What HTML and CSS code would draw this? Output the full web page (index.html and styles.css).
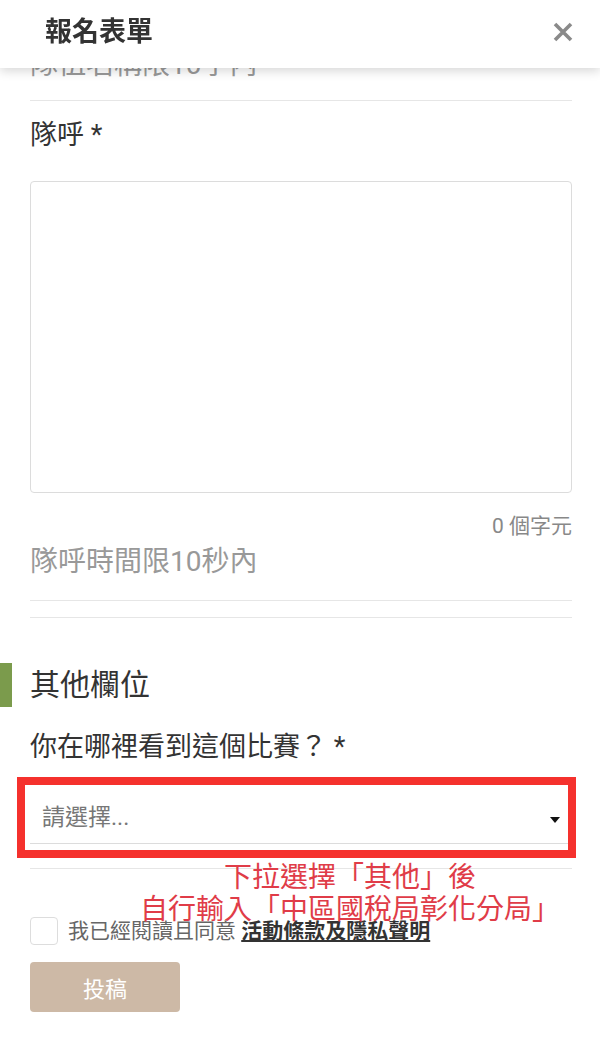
FILE: index.html
```html
<!DOCTYPE html>
<html lang="zh-Hant">
<head>
    <meta charset="UTF-8">
    <meta name="viewport" content="width=device-width, initial-scale=1.0">
    <title>報名表單</title>
    <link rel="stylesheet" href="styles.css">
</head>
<body>
    <header class="modal-header">
        <h2 class="modal-title">報名表單</h2>
        <button class="close-btn" type="button" aria-label="close">
            <svg width="20" height="20" viewBox="0 0 20 20">
                <path d="M2 2 L18 18 M18 2 L2 18" stroke="#8a8a8a" stroke-width="3.6" fill="none"/>
            </svg>
        </button>
    </header>

    <form class="form">
        <div class="field field-first">
            <div class="hint">隊伍名稱限10字內</div>
        </div>

        <div class="field field-slogan">
            <label class="label" for="slogan">隊呼 *</label>
            <textarea id="slogan" class="textarea"></textarea>
            <div class="counter">0 個字元</div>
            <div class="hint">隊呼時間限10秒內</div>
        </div>

        <div class="section-line"></div>

        <h3 class="section-title">其他欄位</h3>

        <div class="field field-source">
            <div class="label">你在哪裡看到這個比賽？ *</div>
            <div class="select-wrap">
                <div class="select">請選擇...</div>
                <span class="caret"></span>
                <div class="note">下拉選擇「其他」後<br>自行輸入「中區國稅局彰化分局」</div>
            </div>
        </div>

        <div class="agree">
            <span class="checkbox"></span>
            <span class="agree-text">我已經閱讀且同意 <a href="#" class="terms">活動條款及隱私聲明</a></span>
        </div>

        <button type="submit" class="submit">投稿</button>
    </form>
</body>
</html>
```

FILE: styles.css
```css
body {
    margin: 0;
    width: 600px;
    font-family: Roboto, "Noto Sans CJK TC", sans-serif;
    color: #333;
    background: #fff;
}

.modal-header {
    position: fixed;
    top: 0;
    left: 0;
    right: 0;
    height: 68px;
    background: #fff;
    box-shadow: 0 3px 10px rgba(0, 0, 0, 0.16);
    display: flex;
    align-items: center;
    justify-content: space-between;
    padding: 0 27px 0 45px;
    z-index: 10;
}

.modal-title {
    margin: 0;
    font-size: 27px;
    font-weight: 700;
    line-height: 36px;
    margin-top: -4px;
    color: #333;
}

.close-btn {
    border: none;
    background: none;
    padding: 0;
    width: 20px;
    height: 20px;
    margin-top: -4px;
}

.form {
    padding: 48px 28px 30px 30px;
}

.field {
    border-bottom: 1px solid #e6e6e6;
}

.field-first {
    padding-bottom: 18px;
}

.hint {
    font-size: 28px;
    line-height: 34px;
    color: #999;
}

.label {
    display: block;
    font-size: 27px;
    line-height: 36px;
    color: #333;
}

.field-slogan {
    padding: 16px 0 21px;
}

.textarea {
    display: block;
    width: 100%;
    height: 312px;
    margin-top: 28px;
    box-sizing: border-box;
    border: 1px solid #dcdcdc;
    border-radius: 4px;
    resize: none;
}

.counter {
    margin-top: 20px;
    text-align: right;
    font-size: 21px;
    line-height: 26px;
    color: #888;
}

.field-slogan .hint {
    margin-top: 6px;
}

.section-line {
    margin-top: 16px;
    border-top: 1px solid #e6e6e6;
}

.section-title {
    margin: 45px 0 0 -30px;
    border-left: 12px solid #7b9b4c;
    padding-left: 18px;
    font-size: 30px;
    font-weight: 400;
    line-height: 44px;
    color: #333;
}

.field-source {
    padding: 22px 0 24px;
}

.select-wrap {
    position: relative;
    margin: 25px 2px 0 0;
}

.select {
    height: 54px;
    box-sizing: border-box;
    padding: 3px 12px 0;
    line-height: 50px;
    font-size: 23px;
    color: #777;
    border-bottom: 1px solid #dcdcdc;
}

.caret {
    position: absolute;
    right: 10px;
    top: 27px;
    width: 0;
    height: 0;
    border-left: 5px solid transparent;
    border-right: 5px solid transparent;
    border-top: 6px solid #111;
}

.select-wrap::after {
    content: "";
    position: absolute;
    top: -13px;
    left: -13px;
    right: -6px;
    bottom: -14px;
    border: 8px solid #f5312d;
    pointer-events: none;
}

.note {
    position: absolute;
    top: 72px;
    left: 0;
    right: 0;
    padding-left: 100px;
    text-align: center;
    font-size: 28px;
    line-height: 32px;
    color: #e03c48;
    z-index: 2;
}

.agree {
    display: flex;
    align-items: center;
    gap: 10px;
    margin-top: 48px;
}

.checkbox {
    width: 28px;
    height: 28px;
    box-sizing: border-box;
    border: 1px solid #ddd;
    border-radius: 4px;
    flex: none;
}

.agree-text {
    font-size: 21px;
    line-height: 28px;
    color: #666;
}

.terms {
    color: #333;
    font-weight: 700;
    text-decoration: underline;
}

.submit {
    display: block;
    margin-top: 17px;
    width: 150px;
    height: 50px;
    border: none;
    border-radius: 4px;
    background-color: #cdb9a6;
    color: #fff;
    font-family: inherit;
    font-size: 22px;
}
```
